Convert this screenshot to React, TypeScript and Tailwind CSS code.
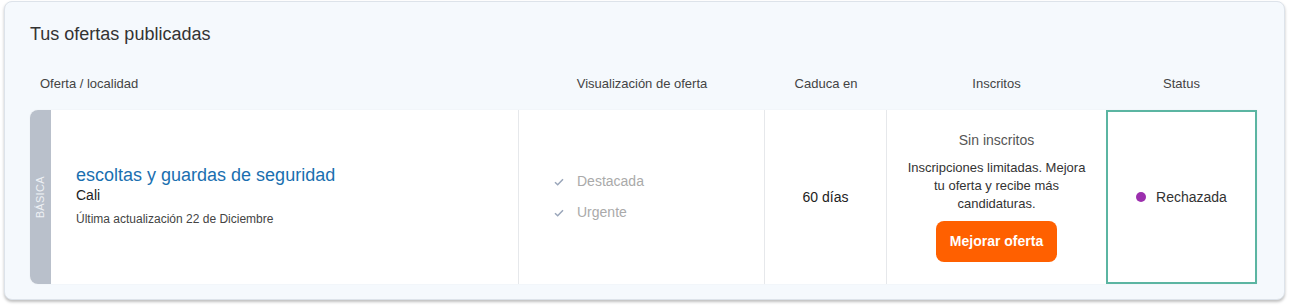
export default function App() {
  return (
    <main className="min-h-screen bg-white px-1 pt-px font-['Liberation_Sans',Arial,sans-serif]">
      <section className="w-[1281px] rounded-lg border border-[#dde3ea] bg-[#f5f9fd] pb-[15px] shadow-[0_2px_3px_rgba(0,0,0,0.25)]">
        <h2 className="pl-[25px] pt-[21px] text-[18px] leading-[22px] text-[#333]">Tus ofertas publicadas</h2>

        {/* HEADER */}
        <div className="mt-[31px] flex pl-[25px] text-[13px] leading-[16px] text-[#444]">
          <div className="w-[489px] pl-[10px]">Oferta / localidad</div>
          <div className="w-[246px] text-center">Visualización de oferta</div>
          <div className="w-[122px] text-center">Caduca en</div>
          <div className="w-[219px] text-center">Inscritos</div>
          <div className="w-[151px] text-center">Status</div>
        </div>

        {/* ROW */}
        <div className="ml-[25px] mt-[18px] flex h-[174px] w-[1227px] rounded-l-lg bg-white shadow-[0_0_2px_rgba(0,0,0,0.06)]">
          <div className="flex w-[21px] items-center justify-center rounded-l-lg bg-[#b9c0cb]">
            <span className="-rotate-90 whitespace-nowrap text-[11px] tracking-[0.3px] text-[#eef1f5]">BÁSICA</span>
          </div>
          <div className="flex w-[468px] flex-col justify-center border-r border-[#e6e8eb] pb-[3px] pl-[25px]">
            <a className="text-[18px] leading-[21px] text-[#1a6fb0]">escoltas y guardas de seguridad</a>
            <p className="text-[14px] leading-[18px] text-[#222]">Cali</p>
            <p className="mt-[7px] text-[12px] leading-[16px] text-[#444]">Última actualización 22 de Diciembre</p>
          </div>
          <div className="flex w-[246px] flex-col justify-center gap-[14px] border-r border-[#e6e8eb] pl-[35px] text-[14px] leading-[17px] text-[#aaa]">
            <div className="flex items-center gap-[13px]">
              <Check />
              <span>Destacada</span>
            </div>
            <div className="flex items-center gap-[13px]">
              <Check />
              <span>Urgente</span>
            </div>
          </div>
          <div className="flex w-[122px] items-center justify-center border-r border-[#e6e8eb] text-[14px] text-[#222]">60 días</div>
          <div className="flex w-[219px] flex-col items-center pt-[22px] text-center">
            <p className="text-[14px] leading-[16px] text-[#555]">Sin inscritos</p>
            <p className="mt-[11px] w-[190px] text-[13px] leading-[18px] text-[#333]">
              Inscripciones limitadas. Mejora tu oferta y recibe más candidaturas.
            </p>
            <button className="mt-[8px] h-[41px] w-[121px] rounded-lg bg-[#ff6000] text-[14px] font-bold text-white">
              Mejorar oferta
            </button>
          </div>
          <div className="flex w-[151px] items-center justify-center gap-[10px] border-2 border-[#5bb5a2] text-[14px] text-[#333]">
            <span className="h-[10px] w-[10px] rounded-full bg-[#9c2fae]" />
            <span>Rechazada</span>
          </div>
        </div>
      </section>
    </main>
  );
}

function Check() {
  return (
    <svg width="10" height="8" viewBox="0 0 10 8" fill="none">
      <path d="M1 4.2 L3.7 6.8 L9 1.2" stroke="#9aa6ba" strokeWidth="1.5" />
    </svg>
  );
}
